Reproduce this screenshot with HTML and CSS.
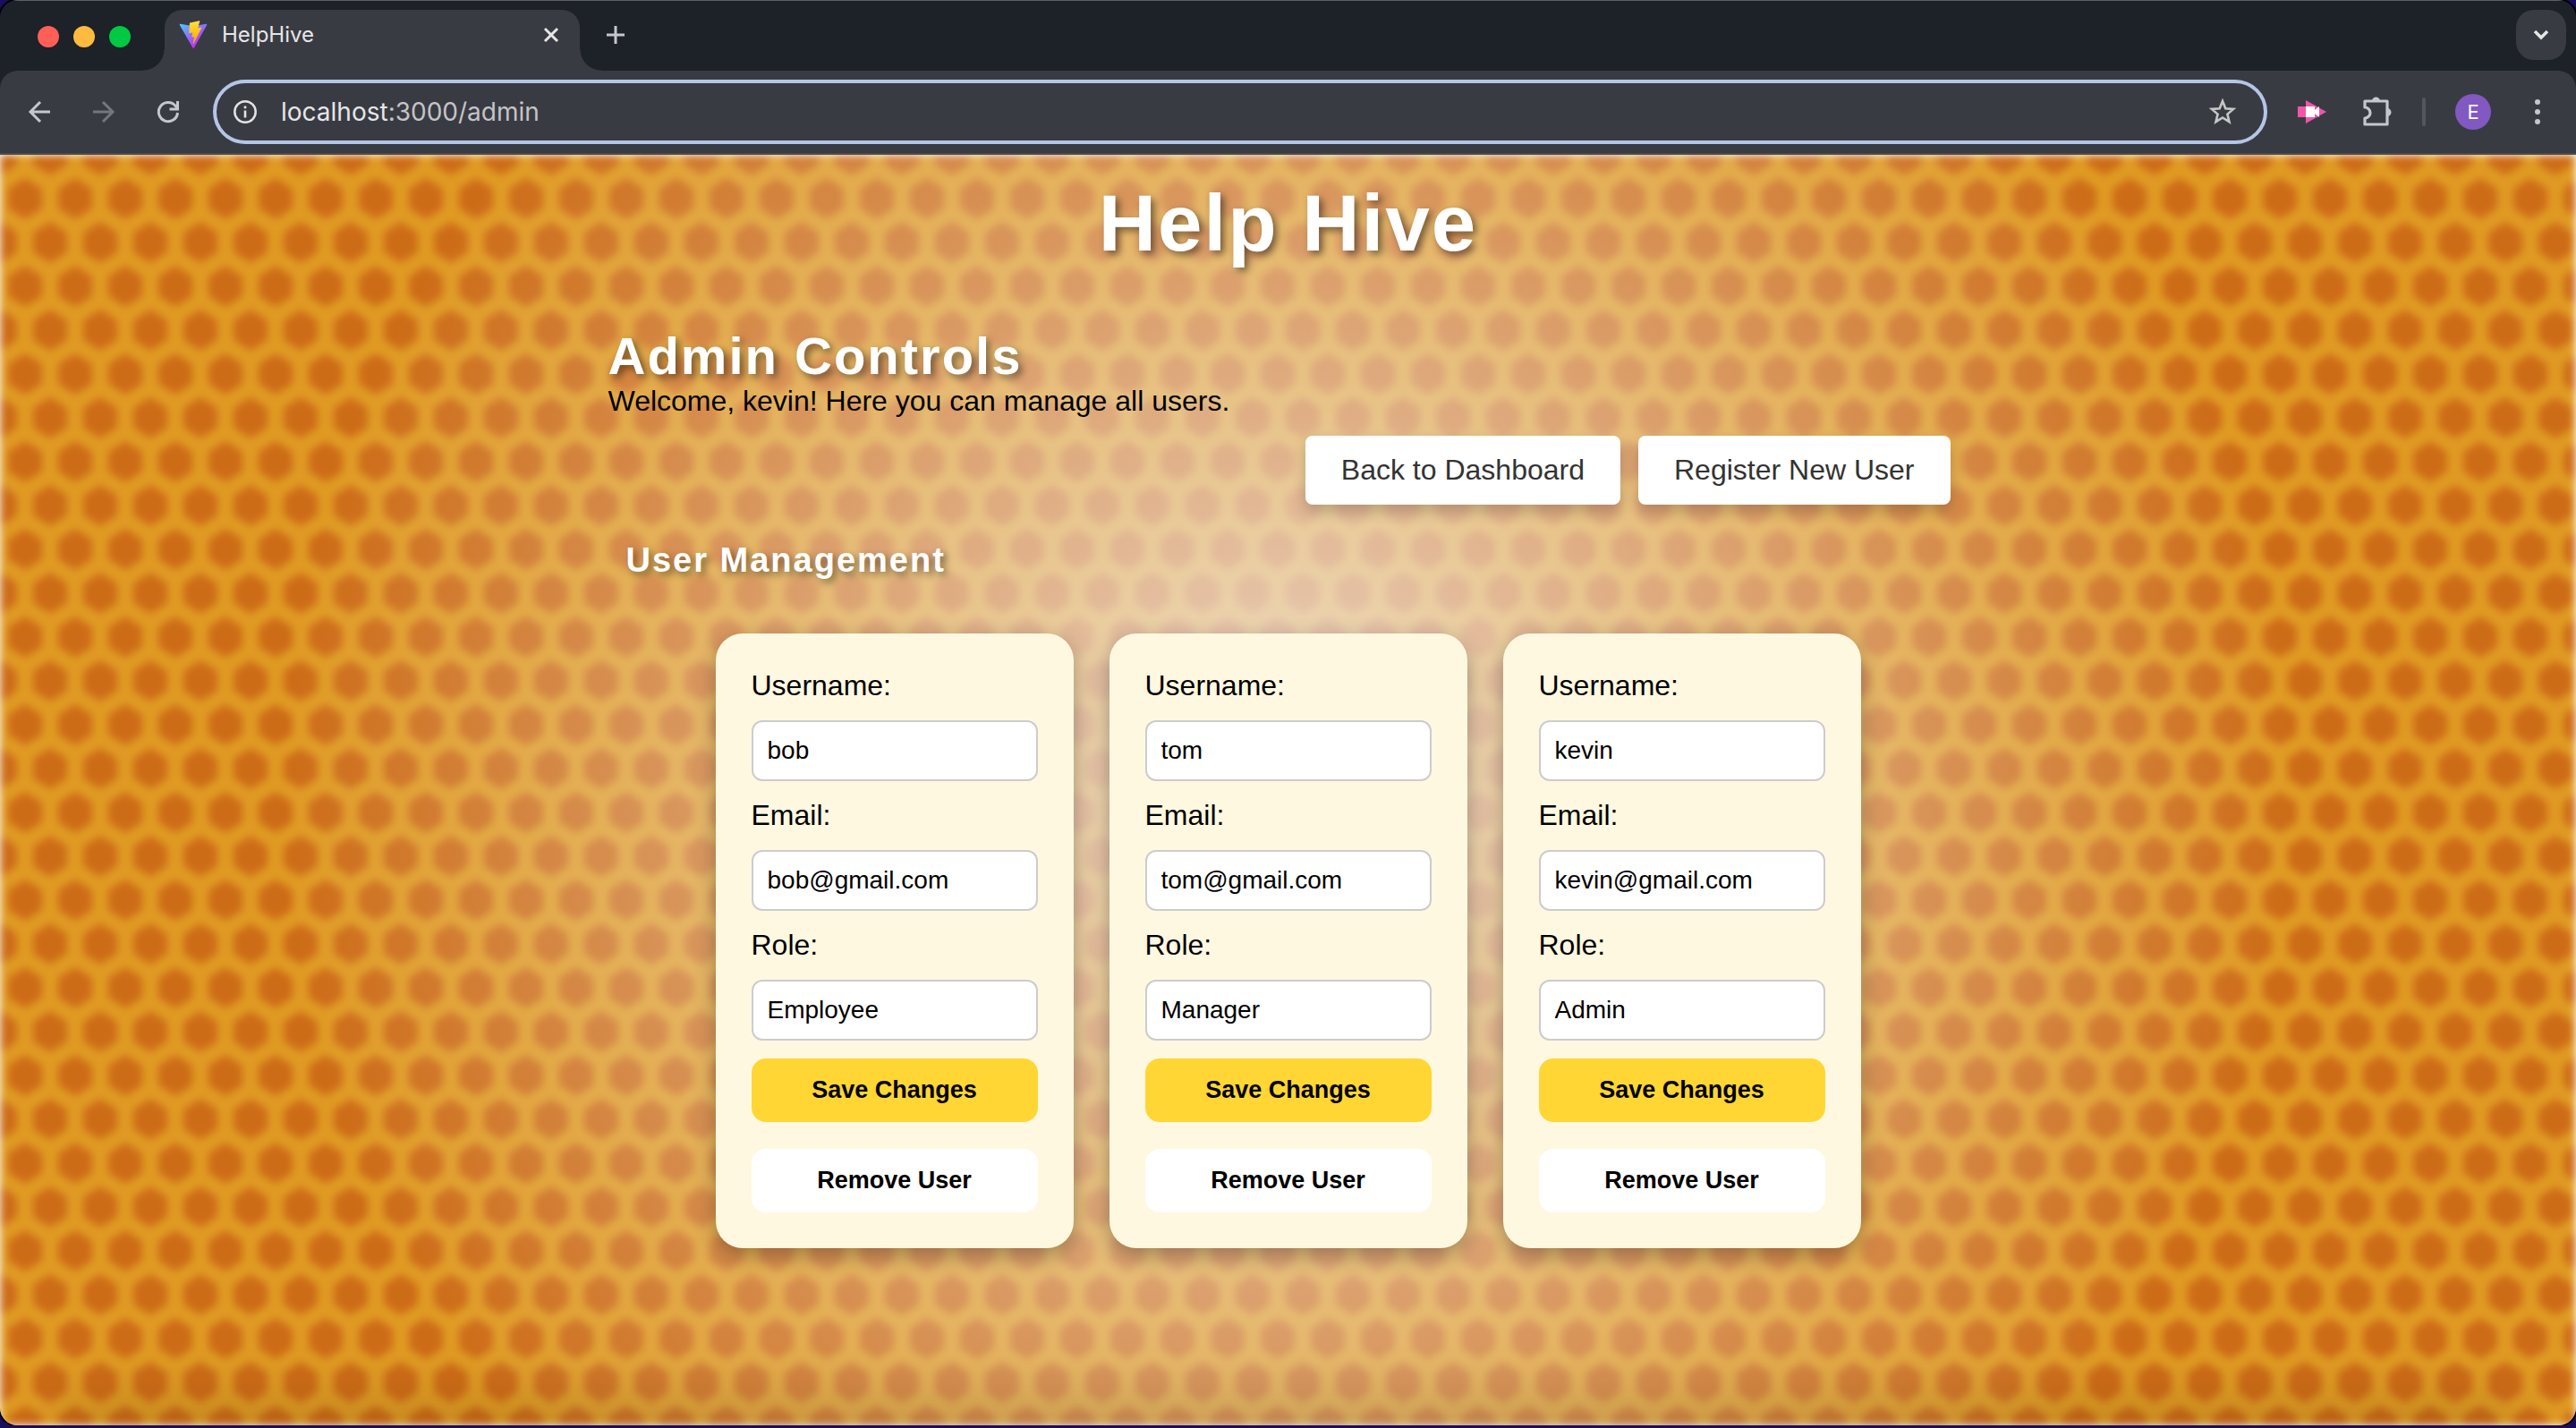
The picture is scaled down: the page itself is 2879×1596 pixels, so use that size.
FILE: index.html
```html
<!DOCTYPE html>
<html lang="en">
<head>
<meta charset="utf-8">
<title>HelpHive</title>
<link rel="stylesheet" href="styles.css">
</head>
<body>
<div class="window">
  <header class="chrome">
    <div class="tabstrip">
      <div class="lights"><i class="light close"></i><i class="light minimise"></i><i class="light zoom"></i></div>
      <div class="tab">
        <svg class="favicon" viewBox="0 0 410 404" aria-hidden="true">
          <defs>
            <linearGradient id="shield" x1="6" y1="33" x2="235" y2="344" gradientUnits="userSpaceOnUse"><stop stop-color="#41D1FF"/><stop offset="1" stop-color="#BD34FE"/></linearGradient>
            <linearGradient id="bolt" x1="194" y1="9" x2="236" y2="293" gradientUnits="userSpaceOnUse"><stop stop-color="#FFEA83"/><stop offset=".083" stop-color="#FFDD35"/><stop offset="1" stop-color="#FFA800"/></linearGradient>
          </defs>
          <path fill="url(#shield)" d="M399.641 59.525L215.643 388.545C211.844 395.338 202.084 395.378 198.228 388.618L10.582 59.556C6.381 52.19 12.68 43.267 21.028 44.759L205.223 77.682C206.398 77.892 207.601 77.89 208.776 77.676L389.119 44.806C397.439 43.289 403.768 52.143 399.641 59.525Z"/>
          <path fill="url(#bolt)" d="M292.965 1.574L156.801 28.255C154.563 28.694 152.906 30.59 152.771 32.866L144.395 174.33C144.198 177.662 147.258 180.248 150.51 179.498L188.42 170.749C191.967 169.931 195.172 173.055 194.443 176.622L183.18 231.775C182.422 235.487 185.907 238.661 189.532 237.56L212.947 230.446C216.577 229.344 220.065 232.527 219.297 236.242L201.398 322.875C200.278 328.294 207.486 331.249 210.492 326.603L212.5 323.5L323.454 102.072C325.312 98.365 322.108 94.137 318.036 94.923L279.014 102.454C275.347 103.161 272.227 99.746 273.262 96.158L298.731 7.867C299.767 4.273 296.636 .855 292.965 1.574Z"/>
        </svg>
        <span class="tab-title">HelpHive</span>
        <button class="icon-button" type="button" aria-label="Close tab"><svg width="24" height="24" viewBox="0 0 24 24"><path d="M5 5l14 14M19 5l-14 14" stroke="#e6e6e6" stroke-width="3" fill="none"/></svg></button>
      </div>
      <button class="icon-button new-tab" type="button" aria-label="New tab"><svg width="24" height="24" viewBox="0 0 24 24"><path d="M12 2v20M2 12h20" stroke="#c4c7d0" stroke-width="3" fill="none"/></svg></button>
      <button class="tab-search" type="button" aria-label="Search tabs"><svg width="20" height="14" viewBox="0 0 20 14"><path d="M3 3l7 7 7-7" stroke="#e6e6e6" stroke-width="3.5" fill="none"/></svg></button>
    </div>
    <div class="toolbar">
      <div class="nav-buttons">
        <button class="icon-button" type="button" aria-label="Back"><svg width="32" height="32" viewBox="0 0 32 32"><path d="M28 16H6M17 5L6 16l11 11" stroke="#c4c7d0" stroke-width="3" fill="none"/></svg></button>
        <button class="icon-button" type="button" aria-label="Forward"><svg width="32" height="32" viewBox="0 0 32 32"><path d="M4 16h22M15 5l11 11-11 11" stroke="#75777d" stroke-width="3" fill="none"/></svg></button>
        <button class="icon-button" type="button" aria-label="Reload"><svg width="32" height="32" viewBox="0 0 32 32"><path d="M26.500 17A10.600 10.600 0 1 1 24 9.200L26.500 12M26.500 4v9H17.500" stroke="#c4c7d0" stroke-width="3" fill="none"/></svg></button>
      </div>
      <div class="address">
        <svg width="28" height="28" viewBox="0 0 28 28" aria-hidden="true"><circle cx="14" cy="14" r="11.7" stroke="#e3e3e3" stroke-width="2.5" fill="none"/><path d="M14 12.500v8M14 7.500v2.700" stroke="#e3e3e3" stroke-width="2.6"/></svg>
        <span class="url">localhost<span class="url-rest">:3000/admin</span></span>
        <button class="icon-button" type="button" aria-label="Bookmark this tab"><svg width="32" height="32" viewBox="0 0 32 32"><path d="M16 4l3.300 8.200 8.800.7-6.700 5.700 2.100 8.600L16 22.500l-7.500 4.700 2.100-8.600-6.700-5.700 8.800-.7z" stroke="#c7c7c7" stroke-width="2.6" fill="none"/></svg></button>
      </div>
      <div class="extensions">
        <button class="icon-button" type="button" aria-label="Screen recorder"><svg width="32" height="32" viewBox="0 0 32 32"><path d="M0 10h9V3l23 13L9 29v-7H0z" fill="#f255a8"/><path d="M9 10h10v4l5-4v12l-5-4v4H9z" fill="#fff"/></svg></button>
        <button class="icon-button" type="button" aria-label="Extensions"><svg width="36" height="36" viewBox="0 0 36 36"><path d="M5 6h25v26H5v-7a6 6 0 0 0 0-12z" stroke="#c4c7d0" stroke-width="3.2" stroke-linejoin="round" fill="none"/><path d="M13 6a4.500 4.500 0 0 1 9 0zM30 14a4.500 4.500 0 0 1 0 9z" fill="#c4c7d0"/></svg></button>
        <span class="divider"></span>
        <button class="avatar" type="button" aria-label="Profile">E</button>
        <button class="icon-button" type="button" aria-label="Menu"><svg width="8" height="28" viewBox="0 0 8 28"><g fill="#c4c7d0"><circle cx="4" cy="3" r="3"/><circle cx="4" cy="14" r="3"/><circle cx="4" cy="25" r="3"/></g></svg></button>
      </div>
    </div>
  </header>
  <div class="page">
    <svg class="honeycomb" aria-hidden="true">
      <defs>
        <path id="cell" d="M0-23L19-11V11L0 23-19 11V-11z"/>
        <pattern id="cells" width="56" height="98" patternUnits="userSpaceOnUse">
          <rect width="56" height="98" fill="#e09b23"/>
          <g fill="#cd6c17"><use href="#cell"/><use href="#cell" x="56"/><use href="#cell" x="28" y="49"/><use href="#cell" y="98"/><use href="#cell" x="56" y="98"/></g>
        </pattern>
      </defs>
      <rect width="100%" height="100%" fill="url(#cells)"/>
    </svg>
    <div class="glow"></div>
    <main class="content">
      <h1>Help Hive</h1>
      <section class="admin">
        <h2>Admin Controls</h2>
        <p>Welcome, kevin! Here you can manage all users.</p>
        <nav class="actions"><a href="#dashboard">Back to Dashboard</a><a href="#register">Register New User</a></nav>
        <h3>User Management</h3>
        <div class="cards">
          <form class="card">
            <label for="name1">Username:</label><input id="name1" type="text" value="bob">
            <label for="mail1">Email:</label><input id="mail1" type="email" value="bob@gmail.com">
            <label for="role1">Role:</label><select id="role1"><option>Employee</option><option>Manager</option><option>Admin</option></select>
            <button class="save" type="button">Save Changes</button>
            <button class="remove" type="button">Remove User</button>
          </form>
          <form class="card">
            <label for="name2">Username:</label><input id="name2" type="text" value="tom">
            <label for="mail2">Email:</label><input id="mail2" type="email" value="tom@gmail.com">
            <label for="role2">Role:</label><select id="role2"><option>Employee</option><option selected>Manager</option><option>Admin</option></select>
            <button class="save" type="button">Save Changes</button>
            <button class="remove" type="button">Remove User</button>
          </form>
          <form class="card">
            <label for="name3">Username:</label><input id="name3" type="text" value="kevin">
            <label for="mail3">Email:</label><input id="mail3" type="email" value="kevin@gmail.com">
            <label for="role3">Role:</label><select id="role3"><option>Employee</option><option>Manager</option><option selected>Admin</option></select>
            <button class="save" type="button">Save Changes</button>
            <button class="remove" type="button">Remove User</button>
          </form>
        </div>
      </section>
    </main>
  </div>
</div>
</body>
</html>
```

FILE: styles.css
```css
* { box-sizing: border-box; }
body {
  margin: 0;
  background: #1a0f5c;
  font: 32px/37px "Liberation Sans", Arial, sans-serif;
  color: #000;
}
h1, h2, h3, p { margin: 0; }
button { font: inherit; border: 0; padding: 0; cursor: pointer; }
.window {
  display: flex;
  flex-direction: column;
  min-height: calc(100vh - 3px);
  border-radius: 20px;
  overflow: hidden;
  box-shadow: 0 0 0 2px #000;
}

/* Browser frame */
.chrome { background: #1d2128; font-family: Inter, sans-serif; border-top: 1px solid #5d6066; }
.tabstrip { display: flex; align-items: center; height: 78px; padding: 10px 11px 0 42px; }
.lights { display: flex; gap: 16px; width: 142px; padding-bottom: 9px; }
.light { width: 24px; height: 24px; border-radius: 50%; }
.close { background: #ff5f57; }
.minimise { background: #ffbb40; }
.zoom { background: #00c944; }
.tab {
  position: relative;
  display: flex;
  align-items: center;
  gap: 16px;
  width: 464px;
  height: 68px;
  padding: 0 20px 12px 16px;
  background: #393b43;
  border-radius: 20px 20px 0 0;
}
.tab::before, .tab::after {
  content: "";
  position: absolute;
  bottom: 0;
  width: 24px;
  height: 24px;
}
.tab::before { right: 100%; background: radial-gradient(circle at 0 0, transparent 23px, #393b43 24px); }
.tab::after { left: 100%; background: radial-gradient(circle at 100% 0, transparent 23px, #393b43 24px); }
.favicon { width: 32px; height: 32px; }
.tab-title { flex: 1; color: #e6e6e6; font-size: 24px; line-height: 32px; }
.icon-button { display: flex; background: none; }
.new-tab { margin: 0 auto 12px 28px; }
.tab-search {
  display: grid;
  place-items: center;
  width: 56px;
  height: 56px;
  margin-bottom: 12px;
  border-radius: 20px;
  background: #393b43;
}
.toolbar {
  display: flex;
  align-items: center;
  height: 94px;
  padding: 0 39px 0 28px;
  background: #393b43;
  border-bottom: 2px solid #4a4b50;
  border-radius: 20px 20px 0 0;
}
.nav-buttons { display: flex; gap: 40px; width: 210px; }
.address {
  flex: 1;
  display: flex;
  align-items: center;
  height: 72px;
  padding: 0 30px 0 18px;
  border: 4px solid #b5c5e6;
  border-radius: 36px;
}
.url { flex: 1; padding-left: 26px; color: #e6e6e6; font-size: 28px; line-height: 40px; }
.url-rest { color: #c4c4c6; }
.extensions { display: flex; align-items: center; padding-left: 34px; }
.extensions > :nth-child(2) { margin-left: 38px; }
.divider { width: 4px; height: 32px; margin: 0 33px; border-radius: 2px; background: #54565e; }
.avatar { width: 40px; height: 40px; margin-right: 48px; border-radius: 50%; background: #8258c1; color: #fff; font-size: 22px; line-height: 40px; }

/* Page */
.page { position: relative; flex: 1; background: #fff; overflow: hidden; }
.honeycomb, .glow { position: absolute; inset: 0; width: 100%; height: 100%; }
.honeycomb { filter: blur(5px); }
.glow { background: radial-gradient(circle, rgba(240, 234, 232, .84), rgba(240, 234, 232, 0) 70%); }
.page::after {
  content: "";
  position: absolute;
  left: 60px;
  right: 60px;
  top: 100%;
  height: 60px;
  box-shadow: 0 -10px 80px rgba(0, 0, 0, .2);
}
.content { position: relative; padding: 32px 0 80px; }
h1, h2, h3 { color: #fff; text-shadow: 4px 4px 8px rgba(0, 0, 0, .5); }
h1 { font-size: 89px; line-height: 88px; letter-spacing: 2px; text-align: center; }
.admin { width: 1520px; max-width: 100%; margin: 0 auto; padding-top: 72px; }
h2 { font-size: 58px; line-height: 65px; letter-spacing: 2px; }
.actions { display: flex; justify-content: flex-end; gap: 20px; margin-top: 20px; padding-right: 20px; }
.actions a {
  padding: 20px 40px;
  border-radius: 8px;
  background: #fff;
  color: #333;
  text-decoration: none;
  box-shadow: 0 8px 16px rgba(0, 0, 0, .2);
}
h3 { padding: 40px 20px 0; font-size: 38px; line-height: 44px; letter-spacing: 2px; }
.cards { display: flex; justify-content: center; gap: 40px; margin-top: 60px; }
.card {
  display: flex;
  flex-direction: column;
  width: 400px;
  padding: 40px;
  border-radius: 30px;
  background: #fff8e1;
  box-shadow: 0 8px 24px rgba(0, 0, 0, .3);
}
.card label { margin-bottom: 20px; }
.card input, .card select {
  appearance: none;
  width: 100%;
  height: 68px;
  margin-bottom: 20px;
  padding: 0 16px;
  border: 2px solid #ccc;
  border-radius: 12px;
  background: #fff;
  color: #000;
  font: 28px/32px "Liberation Sans", Arial, sans-serif;
}
.card button { height: 71px; border-radius: 16px; font-size: 27px; font-weight: bold; }
.save { margin-bottom: 30px; background: #ffd633; }
.remove { background: #fff; }
```
